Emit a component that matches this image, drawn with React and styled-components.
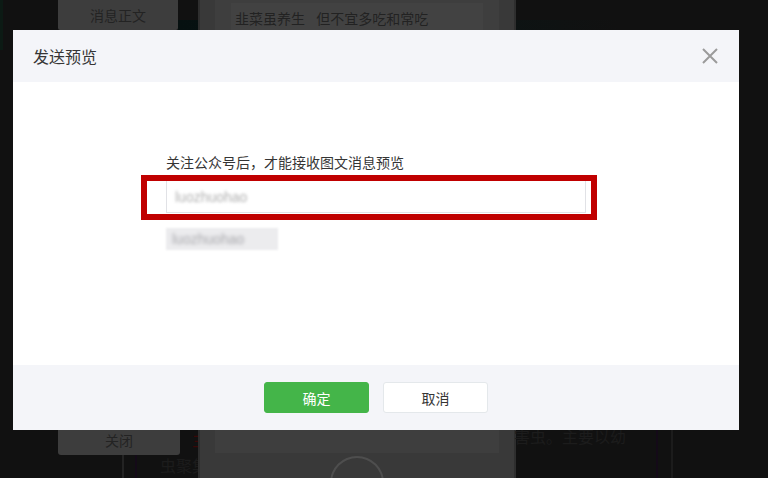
import React from "react";
import styled, { createGlobalStyle } from "styled-components";

const Global = createGlobalStyle`
  html, body { margin: 0; padding: 0; }
  body {
    width: 768px; height: 478px; overflow: hidden;
    background: #111111;
    font-family: "Noto Sans CJK SC", "Noto Sans", "Liberation Sans", sans-serif;
  }
`;

const Page = styled.div`
  position: relative;
  width: 768px;
  height: 478px;
  overflow: hidden;
  background: #111111;
  display: grid;
  grid-template-columns: 58px 122px 1fr;
`;

const EdgeLine = styled.div`
  width: 3px;
  height: 50px;
  background: #0c1a14;
`;

const SideCol = styled.div`
  display: flex;
  flex-direction: column;
  justify-content: space-between;
  align-items: flex-start;
  height: 478px;
`;

const SideButton = styled.div`
  width: ${p => p.$w}px;
  height: 30px;
  background: #3d3d3d;
  color: #232323;
  font-size: 14px;
  display: flex;
  align-items: center;
  justify-content: center;
  border-radius: ${p => (p.$bottom ? "0 0 3px 3px" : "0 0 2px 2px")};
  margin-bottom: ${p => (p.$bottom ? "23px" : "0")};
`;

const Article = styled.div`
  display: flex;
  flex-direction: column;
  justify-content: flex-end;
  padding-bottom: 0;
  color: #1c1c1c;
  font-size: 16px;
  margin-left: -20px;
`;

const ArticleLine = styled.div`
  display: flex;
  margin-left: ${p => p.$indent}px;
  height: 26px;
  align-items: center;
`;

const RedChar = styled.span`
  color: #3a0808;
`;

const Teal = styled.div`
  position: absolute;
  left: 178px;
  top: 20px;
  width: 440px;
  height: 10px;
  background: linear-gradient(90deg, #061010, #0a1414 60%, #111 100%);
`;

const VLine = styled.div`
  position: absolute;
  left: ${p => p.$x}px;
  top: ${p => p.$top}px;
  width: 2px;
  bottom: 0;
  background: ${p => p.$c};
`;

const Phone = styled.div`
  position: absolute;
  left: 198px;
  top: -30px;
  width: 318px;
  height: 540px;
  background: #393939;
  border-left: 2px solid #2e2e2e;
  border-right: 2px solid #2e2e2e;
  box-sizing: border-box;
  display: flex;
  flex-direction: column;
  align-items: center;
  padding: 30px 15px 0;
`;

const PhoneScreen = styled.div`
  width: 100%;
  height: 457px;
  background: #3e3e3e;
  box-sizing: border-box;
  padding: 3px 16px 0;
`;

const PhoneCard = styled.div`
  background: #424242;
  height: 30px;
  padding: 0 4px;
  display: flex;
  align-items: center;
  font-size: 14px;
  color: #222;
  word-spacing: 8px;
`;

const HomeButton = styled.div`
  margin-top: 3px;
  width: 50px;
  height: 50px;
  border-radius: 50%;
  border: 2px solid #4e4e4e;
`;

const ArticleTail = styled.div`
  position: absolute;
  left: 514px;
  top: 426px;
  font-size: 16px;
  line-height: 20px;
  color: #1c1c1c;
`;

const Modal = styled.div`
  position: absolute;
  left: 13px;
  top: 30px;
  width: 726px;
  height: 400px;
  background: #ffffff;
  display: flex;
  flex-direction: column;
`;

const Header = styled.div`
  height: 52px;
  background: #f4f5f9;
  display: flex;
  align-items: center;
  justify-content: space-between;
  padding: 0 21px 0 20px;
`;

const Title = styled.div`
  font-size: 16px;
  color: #353535;
`;

const Close = styled.div`
  width: 16px;
  height: 16px;
  display: flex;
`;

const Body = styled.div`
  flex: 1;
  padding-top: 70px;
  display: flex;
  justify-content: center;
`;

const Form = styled.div`
  width: 420px;
  display: flex;
  flex-direction: column;
`;

const Label = styled.div`
  font-size: 14px;
  line-height: 20px;
  color: #353535;
`;

const InputWrap = styled.div`
  position: relative;
  margin-top: 8px;
`;

const Input = styled.div`
  height: 33px;
  border: 1px solid #e1e2e6;
  box-sizing: border-box;
  background: #fff;
  display: flex;
  align-items: center;
  padding-left: 8px;
`;

const Blurred = styled.span`
  font-size: 14px;
  color: ${p => p.$c};
  filter: blur(1.4px);
  font-family: "Liberation Sans", sans-serif;
`;

const Annotation = styled.div`
  position: absolute;
  left: -25px;
  right: -11px;
  top: -5px;
  bottom: -7px;
  border: 6px solid #c00000;
`;

const Chip = styled.div`
  margin-top: 15px;
  width: 112px;
  height: 22px;
  background: #ececee;
  filter: blur(0.8px);
  display: flex;
  align-items: center;
  padding-left: 6px;
  box-sizing: border-box;
`;

const Footer = styled.div`
  height: 65px;
  background: #f4f5f9;
  display: flex;
  justify-content: center;
  gap: 14px;
  padding-top: 17px;
  box-sizing: border-box;
`;

const Button = styled.div`
  width: 105px;
  height: 31px;
  box-sizing: border-box;
  border-radius: 3px;
  display: flex;
  align-items: center;
  justify-content: center;
  font-size: 14px;
  background: ${p => (p.$primary ? "#44b549" : "#ffffff")};
  color: ${p => (p.$primary ? "#ffffff" : "#353535")};
  border: 1px solid ${p => (p.$primary ? "#44b549" : "#e4e8eb")};
`;

export default function App() {
  return (
    <>
      <Global />
      <Page>
        <EdgeLine />
        <SideCol>
          <SideButton $w={120}>消息正文</SideButton>
          <SideButton $w={122} $bottom>关闭</SideButton>
        </SideCol>
        <Article>
          <ArticleLine $indent={32}>
            <RedChar>主</RedChar>
          </ArticleLine>
          <ArticleLine $indent={0}>虫聚集</ArticleLine>
        </Article>
        <Teal />
        <VLine $x={122} $top={455} $c="#232323" />
        <VLine $x={135} $top={455} $c="#140a18" />
        <VLine $x={656} $top={425} $c="#140a18" />
        <VLine $x={671} $top={425} $c="#1c1c1c" />
        <Phone>
          <PhoneScreen>
            <PhoneCard>韭菜虽养生 但不宜多吃和常吃</PhoneCard>
          </PhoneScreen>
          <HomeButton />
        </Phone>
        <ArticleTail>害虫。主要以幼</ArticleTail>
        <Modal>
          <Header>
            <Title>发送预览</Title>
            <Close>
              <svg width="16" height="16" viewBox="0 0 16 16">
                <path d="M1 1 L15 15 M15 1 L1 15" stroke="#9b9b9b" strokeWidth="2" fill="none" />
              </svg>
            </Close>
          </Header>
          <Body>
            <Form>
              <Label>关注公众号后，才能接收图文消息预览</Label>
              <InputWrap>
                <Input>
                  <Blurred $c="#b0b0b0">luozhuohao</Blurred>
                </Input>
                <Annotation />
              </InputWrap>
              <Chip>
                <Blurred $c="#a8a8ac">luozhuohao</Blurred>
              </Chip>
            </Form>
          </Body>
          <Footer>
            <Button $primary>确定</Button>
            <Button>取消</Button>
          </Footer>
        </Modal>
      </Page>
    </>
  );
}
